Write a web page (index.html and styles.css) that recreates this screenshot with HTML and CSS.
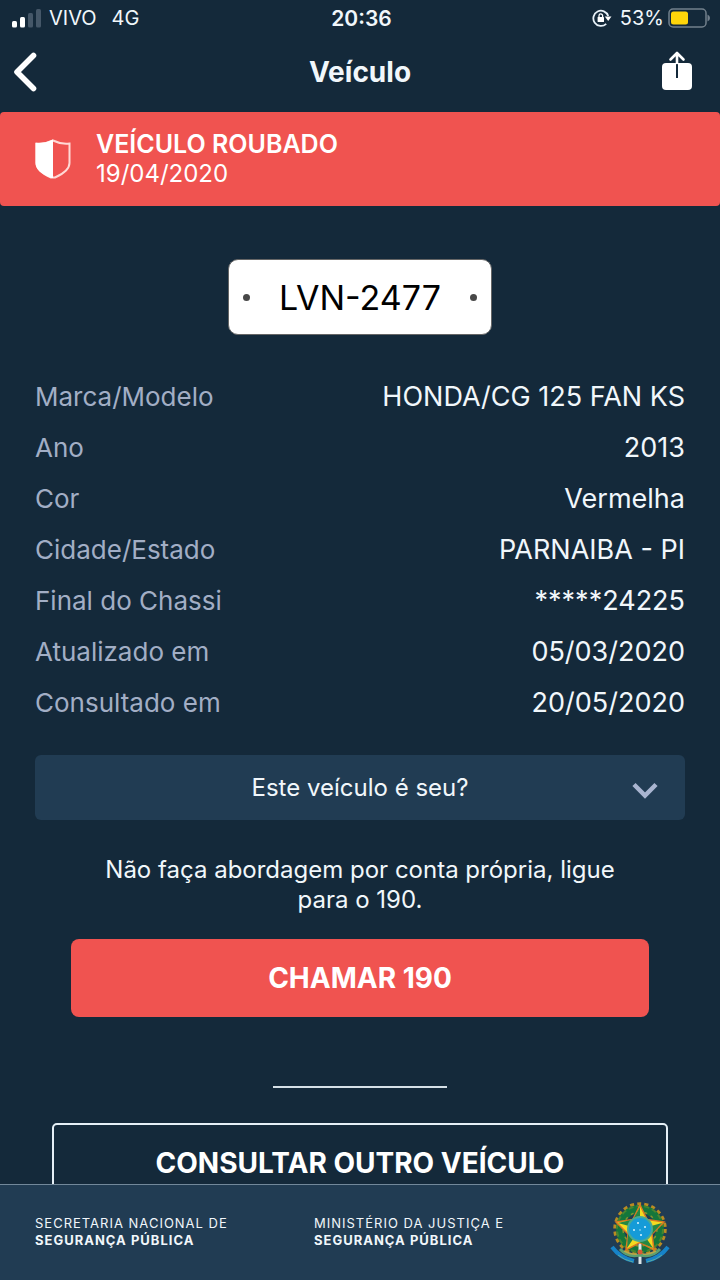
FILE: index.html
```html
<!DOCTYPE html>
<html lang="pt-BR">
<head>
<meta charset="utf-8">
<meta name="viewport" content="width=device-width, initial-scale=1">
<title>Veículo</title>
<link rel="stylesheet" href="styles.css">
</head>
<body>
<div class="app">
  <div class="status">
    <div class="status-left">
      <svg class="signal" viewBox="0 0 30 20" aria-hidden="true">
        <rect x="0" y="13" width="5" height="6.500" rx="1.5" fill="#fff"/>
        <rect x="8" y="9" width="5" height="10.500" rx="1.5" fill="#fff"/>
        <rect x="16" y="5" width="5" height="14.500" rx="1.5" fill="#455768"/>
        <rect x="24" y="1" width="5" height="18.500" rx="1.5" fill="#455768"/>
      </svg>
      <span>VIVO</span>
      <span class="network">4G</span>
    </div>
    <span class="clock">20:36</span>
    <div class="status-right">
      <svg class="lock" viewBox="0 0 20 20" aria-hidden="true">
        <path d="M14.200 15.800A7.600 7.600 0 1 1 16.200 8" fill="none" stroke="#e8f1f8" stroke-width="1.8"/>
        <path d="M12.800 8.500H19.500L16.200 13Z" fill="#fff"/>
        <rect x="5.600" y="9" width="6.400" height="5" rx=".6" fill="#fff"/>
        <path d="M7 9.500V7.700a1.800 1.800 0 0 1 3.600 0V9.500" fill="none" stroke="#fff" stroke-width="1.3"/>
      </svg>
      <span>53%</span>
      <svg class="battery" viewBox="0 0 43 20" aria-hidden="true">
        <rect x="1" y="1" width="37" height="18" rx="4" fill="none" stroke="#72808c" stroke-width="1.5"/>
        <rect x="3" y="3.500" width="17" height="13" rx="2.5" fill="#ffd60a"/>
        <path d="M39.500 6.500q2.500 1 2.500 3.500t-2.500 3.500z" fill="#72808c"/>
      </svg>
    </div>
  </div>

  <header class="navbar">
    <button class="nav-button" type="button" aria-label="Voltar">
      <svg class="back" viewBox="0 0 24 40"><path d="M20.500 3.500 4 20 20.500 36.500" fill="none" stroke="#fff" stroke-width="5.600" stroke-linecap="round" stroke-linejoin="round"/></svg>
    </button>
    <h1 class="title">Veículo</h1>
    <button class="nav-button share-button" type="button" aria-label="Compartilhar">
      <svg class="share" viewBox="0 0 30 40">
        <rect x="0" y="12" width="30" height="27" rx="4" fill="#fff"/>
        <path d="M15 12V27" stroke="#14293a" stroke-width="2"/>
        <path d="M15 12V2M8.500 8.500 15 2l6.500 6.500" fill="none" stroke="#fff" stroke-width="2.600" stroke-linecap="round" stroke-linejoin="round"/>
      </svg>
    </button>
  </header>

  <main class="content">
    <section class="alert">
      <svg class="shield" viewBox="0 0 36 40" aria-hidden="true">
        <path d="M18 1.500Q26 5.500 34.500 4.500V24Q34.500 32 20 38.500H16Q1.500 32 1.500 24V4.500Q10 5.500 18 1.500Z" fill="none" stroke="#ffd9d5" stroke-width="2"/>
        <path d="M18 .5V39H16Q.5 33 .5 24V4Q10 4.500 18 .5Z" fill="#fff"/>
      </svg>
      <div class="alert-text">
        <strong>VEÍCULO ROUBADO</strong>
        <span>19/04/2020</span>
      </div>
    </section>

    <div class="plate"><i class="screw"></i><span>LVN-2477</span><i class="screw"></i></div>

    <dl class="details">
      <div class="row"><dt>Marca/Modelo</dt><dd>HONDA/CG 125 FAN KS</dd></div>
      <div class="row"><dt>Ano</dt><dd>2013</dd></div>
      <div class="row"><dt>Cor</dt><dd>Vermelha</dd></div>
      <div class="row"><dt>Cidade/Estado</dt><dd>PARNAIBA - PI</dd></div>
      <div class="row"><dt>Final do Chassi</dt><dd>*****24225</dd></div>
      <div class="row"><dt>Atualizado em</dt><dd>05/03/2020</dd></div>
      <div class="row"><dt>Consultado em</dt><dd>20/05/2020</dd></div>
    </dl>

    <button class="owner" type="button" aria-expanded="false">
      <span class="owner-label">Este veículo é seu?</span>
      <svg class="chevron" viewBox="0 0 26 18" aria-hidden="true"><path d="M2 2.500 13 13.500 24 2.500" fill="none" stroke="#a9b5d0" stroke-width="4.500"/></svg>
    </button>

    <p class="notice">Não faça abordagem por conta própria, ligue para o 190.</p>
    <button class="call" type="button">CHAMAR 190</button>
    <hr class="divider">
    <button class="search" type="button">CONSULTAR OUTRO VEÍCULO</button>
  </main>

  <footer class="footer">
    <p class="agency">SECRETARIA NACIONAL DE<strong>SEGURANÇA PÚBLICA</strong></p>
    <p class="agency">MINISTÉRIO DA JUSTIÇA E<strong>SEGURANÇA PÚBLICA</strong></p>
    <svg class="arms" viewBox="0 0 60 64" role="img" aria-label="Brasão da República">
      <circle cx="30" cy="28" r="25" fill="none" stroke="#b98b22" stroke-width="3.500" stroke-dasharray="4 3.140"/>
      <circle cx="30" cy="28" r="20" fill="none" stroke="#14763b" stroke-width="8"/>
      <circle cx="30" cy="28" r="23" fill="none" stroke="#48842f" stroke-width="2" stroke-dasharray="5 3"/>
      <circle cx="30" cy="28" r="17" fill="none" stroke="#87912f" stroke-width="1.500" stroke-dasharray="3 4"/>
      <path d="M28.500 38h3v25h-3z" fill="#dce5e8"/>
      <path d="M30 4 37 18.400 54 21 42 33 44 49 30 41.500 16 49 18 33 6 21 23 18.400Z" fill="#f4da20" stroke="#dc7821" stroke-width="1.500"/>
      <path d="M30 6V28L23 18.400ZM52 22 30 28 42 33ZM43 47 30 28 30 41.500ZM17 47 30 28 18 33ZM8 22 30 28 23 18.400Z" fill="#268743"/>
      <circle cx="30" cy="28" r="12" fill="#159bd8" stroke="#48a994" stroke-width="2"/>
      <g fill="#d9f4ff"><circle cx="28" cy="22" r="1"/><circle cx="35" cy="26" r="1"/><circle cx="24" cy="29" r="1"/><circle cx="31" cy="34" r="1"/><circle cx="30" cy="29" r=".7"/></g>
      <path d="M10 48Q18 57 30 54 42 57 50 48" fill="none" stroke="#5c9f70" stroke-width="3"/>
      <path d="M14 50Q22 54 27 53M46 50Q38 54 33 53" fill="none" stroke="#b4a64b" stroke-width="1.500"/>
      <circle cx="30" cy="51" r="2.500" fill="#d85a35"/>
      <path d="M2 46Q10 57 24 60M58 46Q50 57 36 60" fill="none" stroke="#1683c8" stroke-width="4"/>
      <path d="M8 54Q14 59 23 61M52 54Q46 59 37 61" fill="none" stroke="#58a7a0" stroke-width="1"/>
    </svg>
  </footer>
</div>
</body>
</html>
```
FILE: styles.css
```css
* { box-sizing: border-box; }
body { margin: 0; background: #14293a; color: #f1f7fb; font-family: Inter, "Liberation Sans", sans-serif; }
button { font: inherit; color: inherit; cursor: pointer; }
svg { display: block; flex: none; }
.app { display: flex; flex-direction: column; height: 100vh; }
.status { display: grid; grid-template-columns: 1fr auto 1fr; align-items: center; height: 36px; padding: 0 9px 0 12px; font-size: 20px; }
.status-left, .status-right { display: flex; align-items: center; }
.status-left { gap: 7px; }
.status-right { justify-content: flex-end; gap: 4px; }
.signal { width: 30px; height: 20px; }
.network { margin-left: 8px; }
.clock { font-weight: 600; font-size: 21px; }
.lock { width: 20px; height: 20px; margin-right: 4px; }
.battery { width: 43px; height: 20px; }
.navbar { display: grid; grid-template-columns: 1fr auto 1fr; align-items: center; height: 76px; padding: 0 28px 4px 13px; }
.nav-button { justify-self: start; padding: 0; border: 0; background: none; }
.share-button { justify-self: end; padding-bottom: 3px; }
.back { width: 24px; height: 40px; }
.share { width: 30px; height: 40px; }
.title { margin: 0 0 0 15px; font-size: 28px; font-weight: 700; }
.content { flex: 1; min-height: 0; overflow: hidden; display: flex; flex-direction: column; }
.content > * { flex-shrink: 0; }
.alert { display: flex; align-items: center; gap: 25px; padding: 17px 35px; border-radius: 4px; background: #f05350; color: #fff; }
.shield { width: 36px; height: 40px; }
.alert-text { display: flex; flex-direction: column; font-size: 24px; line-height: 30px; }
.alert-text strong { font-size: 25px; font-weight: 600; }
.plate { display: flex; align-items: center; justify-content: space-between; align-self: center; width: 264px; height: 76px; margin-top: 53px; padding: 0 14px; border: 1px solid #666; border-radius: 10px; background: #fff; color: #000; font-size: 34px; }
.screw { width: 7px; height: 7px; border-radius: 50%; background: #484848; }
.details { margin: 36px 35px 0; font-size: 26px; line-height: 51px; }
.row { display: flex; justify-content: space-between; }
.row dt { color: #a2aec5; }
.row dd { margin: 0; font-size: 27px; }
.owner { display: grid; grid-template-columns: 1fr auto 1fr; align-items: center; height: 65px; margin: 27px 35px 0; padding: 0 27px; border: 0; border-radius: 6px; background: #213c53; font-size: 24px; }
.owner-label { grid-column: 2; }
.chevron { width: 26px; height: 18px; justify-self: end; margin-top: 7px; }
.notice { margin: 35px 100px 0; text-align: center; font-size: 24px; line-height: 30px; }
.call { height: 78px; margin: 24px 71px 0; border: 0; border-radius: 8px; background: #f05350; color: #fff; font-size: 28px; font-weight: 700; }
.divider { width: 174px; height: 2px; margin: 69px auto 0; border: 0; background: #d5dfe6; }
.search { height: 80px; margin: 35px 52px 0; border: 2px solid #e5eff6; border-radius: 5px; background: none; color: #fff; font-size: 28px; font-weight: 700; }
.footer { display: grid; grid-template-columns: 279px 1fr auto; align-items: center; height: 96px; padding: 0 50px 0 35px; border-top: 1px solid #72889a; background: #213c53; }
.agency { margin: 0 0 2px; font-size: 13px; line-height: 17px; letter-spacing: 1px; }
.agency strong { display: block; }
.arms { width: 60px; height: 64px; }
```
